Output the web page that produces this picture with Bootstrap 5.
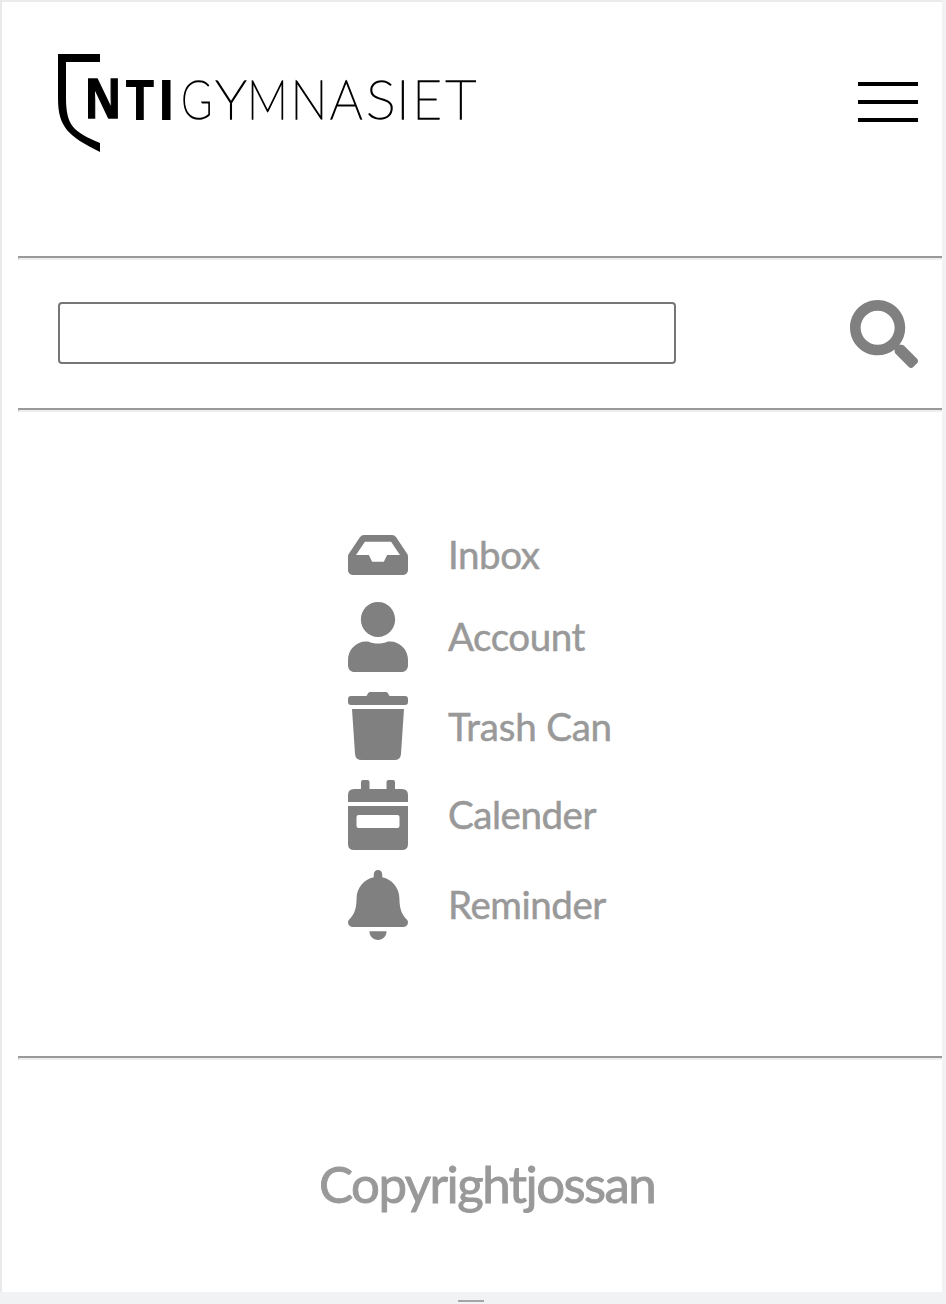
<!DOCTYPE html>
<html lang="sv">
<head>
<meta charset="utf-8">
<meta name="viewport" content="width=device-width, initial-scale=1">
<title>NTI Gymnasiet</title>
<link href="https://cdn.jsdelivr.net/npm/bootstrap@5.3.0/dist/css/bootstrap.min.css" rel="stylesheet">
<style>
html,body{height:100%;overflow:hidden}
body{background:#f1f2f3;font-family:Lato,"Liberation Sans",sans-serif;color:#999}
.page{width:942px;height:1292px;background:#fff;border-left:2px solid #e9e9e9;border-top:2px solid #ebebeb}
.site-head{height:254px;padding:52px 24px 0 56px}
.burger{width:60px;height:40px;margin-top:28px}
.burger span{height:4px;background:#000}
.rule{height:4px;margin-left:16px;border-top:2px solid #999;border-bottom:2px solid #eee;border-left:1px solid #aaa}
.search-row{height:148px;padding:40px 24px 0 56px}
.search-box{width:618px;height:62px;margin-top:2px;border:2px solid #767676;border-radius:4px;background:#fff;padding:0 12px;font-size:36px}
.search-box:focus{box-shadow:none;border-color:#767676}
.menu{height:644px;padding:123px 0 0 346px;gap:20px}
.menu a{gap:40px;color:inherit;font-size:38.5px;line-height:40px}
.menu span{letter-spacing:-.45px;padding-bottom:2px;-webkit-text-stroke:.5px #999}
.menu .trash-label{letter-spacing:-.2px;padding-bottom:0}
.menu a:first-child{height:40px;margin-bottom:7px}
svg{display:block;fill:gray}
.logo{fill:#000}
.thin-letters{font-family:Lato,sans-serif;font-weight:100;font-size:56px;stroke:#000;stroke-width:1.5px}
.bold-letters{font-family:"Open Sans",sans-serif;font-weight:700;font-size:56px}
.site-foot{font-size:51px;line-height:60px;padding:94px 0 0 317px;letter-spacing:-1.55px;-webkit-text-stroke:.9px #999}
.grip{width:26px;height:2px;margin:8px 0 0 458px;background:#a6a6a6}
</style>
</head>
<body>
<div class="page d-flex flex-column">
  <header class="site-head d-flex justify-content-between align-items-start">
    <a href="#" aria-label="NTI Gymnasiet">
      <svg class="logo" width="430" height="100" viewBox="58 54 430 100">
        <path d="M58 54H100V62H66V98C66 126 74 132 100 143V152C68 136 58 127 58 98Z"/>
        <g class="bold-letters">
          <text transform="translate(84.500 117.500) scale(.81 .96)" stroke="#000" stroke-width="1.400">N</text>
          <text transform="translate(125 120) scale(.92 1)">T</text>
          <text transform="translate(157 120)">I</text>
        </g>
        <g class="thin-letters">
          <text transform="translate(181 119.300) scale(.76 .98)">G</text>
          <text transform="translate(215.500 119.300) scale(.97 .98)">Y</text>
          <text transform="translate(247 119.300) scale(.82 .98)">M</text>
          <text transform="translate(290.500 119.300) scale(.88 .98)">N</text>
          <text transform="translate(330 119.300) scale(.91 .98)">A</text>
          <text transform="translate(366 119.300) scale(1 .98)">S</text>
          <text transform="translate(396 119.300) scale(1 .98)">I</text>
          <text transform="translate(412.500 119.300) scale(.9 .98)">E</text>
          <text transform="translate(445.500 119.300) scale(.96 .98)">T</text>
        </g>
      </svg>
    </a>
    <button class="burger btn p-0 border-0 rounded-0 d-flex flex-column justify-content-between" aria-label="Menu"><span class="w-100"></span><span class="w-100"></span><span class="w-100"></span></button>
  </header>
  <div class="rule flex-shrink-0"></div>
  <form class="search-row d-flex justify-content-between align-items-start">
    <input class="search-box form-control" type="text" aria-label="Search">
    <svg width="68" height="68" viewBox="0 0 512 512"><path d="M505 442.700L405.300 343c-4.500-4.500-10.600-7-17-7H372c27.600-35.300 44-79.700 44-128C416 93.100 322.900 0 208 0S0 93.100 0 208s93.100 208 208 208c48.300 0 92.700-16.400 128-44v16.300c0 6.400 2.500 12.500 7 17l99.700 99.700c9.400 9.400 24.600 9.400 33.900 0l28.300-28.300c9.400-9.400 9.400-24.600.1-34zM208 336c-70.700 0-128-57.200-128-128 0-70.700 57.200-128 128-128 70.700 0 128 57.200 128 128 0 70.700-57.200 128-128 128z"/></svg>
  </form>
  <div class="rule flex-shrink-0"></div>
  <nav class="menu d-flex flex-column align-items-start">
    <a href="#" class="d-flex align-items-center text-decoration-none"><svg width="60" height="40" viewBox="0 0 576 384" preserveAspectRatio="none"><path transform="translate(0 -64)" d="M567.900 243.900L462.300 85.400A48 48 0 0 0 422.300 64H153.700a48 48 0 0 0-40 21.400L8.100 243.900A48 48 0 0 0 0 270.500V400c0 26.500 21.500 48 48 48h480c26.500 0 48-21.500 48-48V270.500a48 48 0 0 0-8.100-26.600zM162.300 128h251.400l85.300 128H376l-32 64H232l-32-64H77z"/></svg><span>Inbox</span></a>
    <a href="#" class="d-flex align-items-center text-decoration-none"><svg width="60" height="70" viewBox="0 0 448 512" preserveAspectRatio="none"><path d="M224 256c70.700 0 128-57.300 128-128S294.700 0 224 0 96 57.300 96 128s57.300 128 128 128zm89.600 32h-16.700c-22.200 10.200-46.900 16-72.900 16s-50.600-5.800-72.900-16h-16.700C60.200 288 0 348.200 0 422.400V464c0 26.500 21.500 48 48 48h352c26.500 0 48-21.500 48-48v-41.600c0-74.200-60.200-134.400-134.400-134.400z"/></svg><span>Account</span></a>
    <a href="#" class="d-flex align-items-center text-decoration-none"><svg width="60" height="68" viewBox="0 0 60 68"><path d="M3 4H18C19.500 4 19.500 0 22 0H38C40.500 0 40.500 4 42 4H57Q60 4 60 7V10Q60 13 57 13H3Q0 13 0 10V7Q0 4 3 4ZM4 17H56L53 62Q52.500 68 46.500 68H13.500Q7.500 68 7 62Z"/></svg><span class="trash-label">Trash Can</span></a>
    <a href="#" class="d-flex align-items-center text-decoration-none"><svg width="60" height="70" viewBox="0 0 60 70"><path d="M0 22V15Q0 9 6 9H13V2Q13 0 15 0H19.500Q21.500 0 21.500 2V9H38.500V2Q38.500 0 40.500 0H45Q47 0 47 2V9H54Q60 9 60 15V22Z"/><path fill-rule="evenodd" d="M0 26H60V64Q60 70 54 70H6Q0 70 0 64ZM10.500 35Q8.500 35 8.500 37V46Q8.500 48 10.500 48H49.500Q51.500 48 51.500 46V37Q51.500 35 49.500 35Z"/></svg><span>Calender</span></a>
    <a href="#" class="d-flex align-items-center text-decoration-none"><svg width="60" height="70" viewBox="0 0 448 512" preserveAspectRatio="none"><path d="M224 512c35.300 0 63.900-28.600 63.900-64H160.100c0 35.400 28.600 64 63.900 64zm215.400-149.700c-19.300-20.800-55.500-52-55.500-154.300 0-77.700-54.500-139.900-127.900-155.200V32c0-17.700-14.300-32-32-32s-32 14.300-32 32v20.800C118.600 68.100 64.100 130.300 64.100 208c0 102.300-36.200 133.500-55.500 154.300-6 6.400-8.700 14.100-8.600 21.700.1 16.400 13 32 32.100 32h383.800c19.100 0 32-15.600 32.100-32 .1-7.600-2.600-15.300-8.600-21.700z"/></svg><span>Reminder</span></a>
  </nav>
  <div class="rule flex-shrink-0"></div>
  <footer class="site-foot"><span>Copyrightjossan</span></footer>
</div>
<div class="grip"></div>
<script src="https://cdn.jsdelivr.net/npm/bootstrap@5.3.0/dist/js/bootstrap.bundle.min.js"></script>
</body>
</html>
